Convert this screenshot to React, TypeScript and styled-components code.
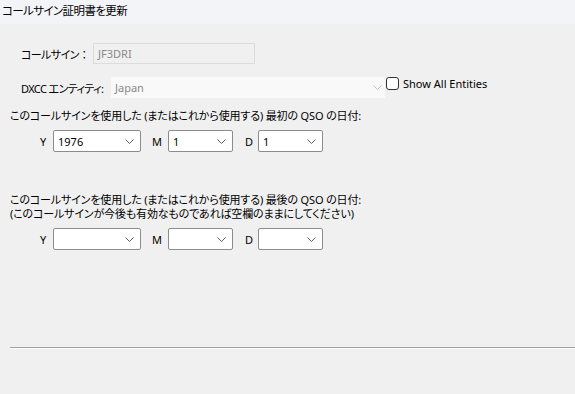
import React from "react";
import styled, { createGlobalStyle } from "styled-components";

const GlobalStyle = createGlobalStyle`
  html, body {
    margin: 0;
    padding: 0;
    background: #f0f0f0;
  }
  body {
    font-family: "Noto Sans", "Noto Sans CJK JP", sans-serif;
    font-size: 11px;
    font-feature-settings: "palt";
    color: #000;
  }
`;

const Chevron = ({ color = "#606060" }: { color?: string }) => (
  <svg width="9" height="5" viewBox="0 0 9 5">
    <path d="M0.5 0.5 L4.5 4.5 L8.5 0.5" fill="none" stroke={color} strokeWidth="1" />
  </svg>
);

interface ISelectProps {
  value?: string;
  width: number;
}

const DateSelect = ({ value, width }: ISelectProps) => (
  <SelectBox style={{ width }}>
    <SelectValue>{value}</SelectValue>
    <Chevron />
  </SelectBox>
);

const App = () => {
  return (
    <Window>
      <GlobalStyle />
      <TitleBar>コールサイン証明書を更新</TitleBar>
      <Body>
        <FormRow>
          <FieldLabel width={72} $tight>
            コールサイン<WideColon>：</WideColon>
          </FieldLabel>
          <CallInput>JF3DRI</CallInput>
        </FormRow>
        <DxccRow>
          <FieldLabel width={90} $tight>
            DXCC エンティティ:
          </FieldLabel>
          <EntitySelect>
            <span>Japan</span>
            <Chevron color="#c4c4c4" />
          </EntitySelect>
          <CheckLabel>
            <CheckBox />
            Show All Entities
          </CheckLabel>
        </DxccRow>

        <Caption>このコールサインを使用した (またはこれから使用する) 最初の QSO の日付:</Caption>
        <DateRow>
          <DateLabel width={13}>Y</DateLabel>
          <DateSelect value="1976" width={88} />
          <DateLabel width={16} gap={11}>M</DateLabel>
          <DateSelect value="1" width={65} />
          <DateLabel width={13} gap={12}>D</DateLabel>
          <DateSelect value="1" width={65} />
        </DateRow>

        <Caption top={41}>
          このコールサインを使用した (またはこれから使用する) 最後の QSO の日付:
          <br />
          (このコールサインが今後も有効なものであれば空欄のままにしてください)
        </Caption>
        <DateRow>
          <DateLabel width={13}>Y</DateLabel>
          <DateSelect width={88} />
          <DateLabel width={16} gap={11}>M</DateLabel>
          <DateSelect width={65} />
          <DateLabel width={13} gap={12}>D</DateLabel>
          <DateSelect width={65} />
        </DateRow>

        <Separator />
      </Body>
    </Window>
  );
};

const Window = styled.div`
  width: 575px;
  height: 394px;
  overflow: hidden;
  display: flex;
  flex-direction: column;
  background: #f0f0f0;
`;

const TitleBar = styled.div`
  height: 24px;
  line-height: 22px;
  padding-left: 2px;
  background: #f3f4f8;
  font-size: 11.5px;
  letter-spacing: -0.6px;
`;

const Body = styled.div`
  display: flex;
  flex-direction: column;
  padding: 19px 0 0 10px;
`;

const FormRow = styled.div`
  display: flex;
  align-items: center;
  padding-left: 11px;
  height: 21px;
`;

const DxccRow = styled(FormRow)`
  margin-top: 13px;
`;

const FieldLabel = styled.div<{ width: number; $tight?: boolean }>`
  flex-shrink: 0;
  width: ${(p) => p.width}px;
  white-space: nowrap;
  ${(p) => p.$tight && "letter-spacing: -0.6px;"}
`;

const WideColon = styled.span`
  font-feature-settings: normal;
  letter-spacing: 0;
`;

const CallInput = styled.div`
  box-sizing: border-box;
  width: 162px;
  height: 21px;
  padding: 0 4px;
  line-height: 19px;
  border: 1px solid #dcdcdc;
  background: #f0f0f0;
  color: #8a8a8a;
`;

const EntitySelect = styled.div`
  box-sizing: border-box;
  width: 274px;
  height: 21px;
  display: flex;
  align-items: center;
  justify-content: space-between;
  padding: 0 3px 0 4px;
  background: #f9f9f9;
  color: #8a8a8a;
`;

const CheckLabel = styled.label`
  display: flex;
  align-items: center;
  gap: 4px;
  align-self: flex-start;
  margin-top: -1px;
  margin-left: 1px;
  white-space: nowrap;
`;

const CheckBox = styled.span`
  box-sizing: border-box;
  width: 13px;
  height: 13px;
  border: 1px solid #333;
  border-radius: 3px;
  background: #fff;
`;

const Caption = styled.div<{ top?: number }>`
  margin-top: ${(p) => p.top ?? 11}px;
  line-height: 14px;
  letter-spacing: -0.15px;
  white-space: nowrap;
`;

const DateRow = styled.div`
  display: flex;
  align-items: center;
  padding-left: 30px;
  margin-top: 7px;
`;

const DateLabel = styled.div<{ width: number; gap?: number }>`
  width: ${(p) => p.width}px;
  margin-left: ${(p) => p.gap ?? 0}px;
`;

const SelectBox = styled.div`
  box-sizing: border-box;
  height: 22px;
  display: flex;
  align-items: center;
  justify-content: space-between;
  padding: 0 6px 0 4px;
  border: 1px solid #8c8c8c;
  border-radius: 2px;
  background: #fff;
`;

const SelectValue = styled.span`
  white-space: nowrap;
`;

const Separator = styled.div`
  margin-top: 97px;
  height: 1px;
  background: #a0a0a0;
  border-bottom: 1px solid #fff;
`;

export default App;
